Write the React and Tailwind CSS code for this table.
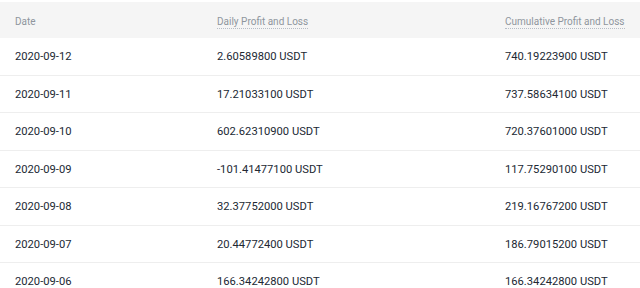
import React from "react";

const rows = [
  ["2020-09-12", "2.60589800 USDT", "740.19223900 USDT"],
  ["2020-09-11", "17.21033100 USDT", "737.58634100 USDT"],
  ["2020-09-10", "602.62310900 USDT", "720.37601000 USDT"],
  ["2020-09-09", "-101.41477100 USDT", "117.75290100 USDT"],
  ["2020-09-08", "32.37752000 USDT", "219.16767200 USDT"],
  ["2020-09-07", "20.44772400 USDT", "186.79015200 USDT"],
  ["2020-09-06", "166.34242800 USDT", "166.34242800 USDT"],
];

export default function App() {
  return (
    <div
      className="w-[640px] h-[288px] overflow-hidden bg-white pt-[2px] text-[11.2px]"
      style={{ fontFamily: "Roboto, 'Liberation Sans', sans-serif" }}
    >
      <div className="flex items-center h-[36px] pt-[2px] bg-[#f5f5f5] text-[#8f959d] text-[10px]">
        <div className="w-[217px] pl-[15px]">Date</div>
        <div className="w-[288px]">
          <span className="border-b border-dotted border-[#b7bdc6] pb-[1px]">Daily Profit and Loss</span>
        </div>
        <div>
          <span className="border-b border-dotted border-[#b7bdc6] pb-[1px]">Cumulative Profit and Loss</span>
        </div>
      </div>
      {rows.map(([d, daily, cum]) => (
        <div
          key={d}
          className="flex items-center h-[37.5px] pt-[3px] border-b border-[#eeeeee] text-[#212833]"
        >
          <div className="w-[217px] pl-[15px]">{d}</div>
          <div className="w-[288px]">{daily}</div>
          <div>{cum}</div>
        </div>
      ))}
    </div>
  );
}
